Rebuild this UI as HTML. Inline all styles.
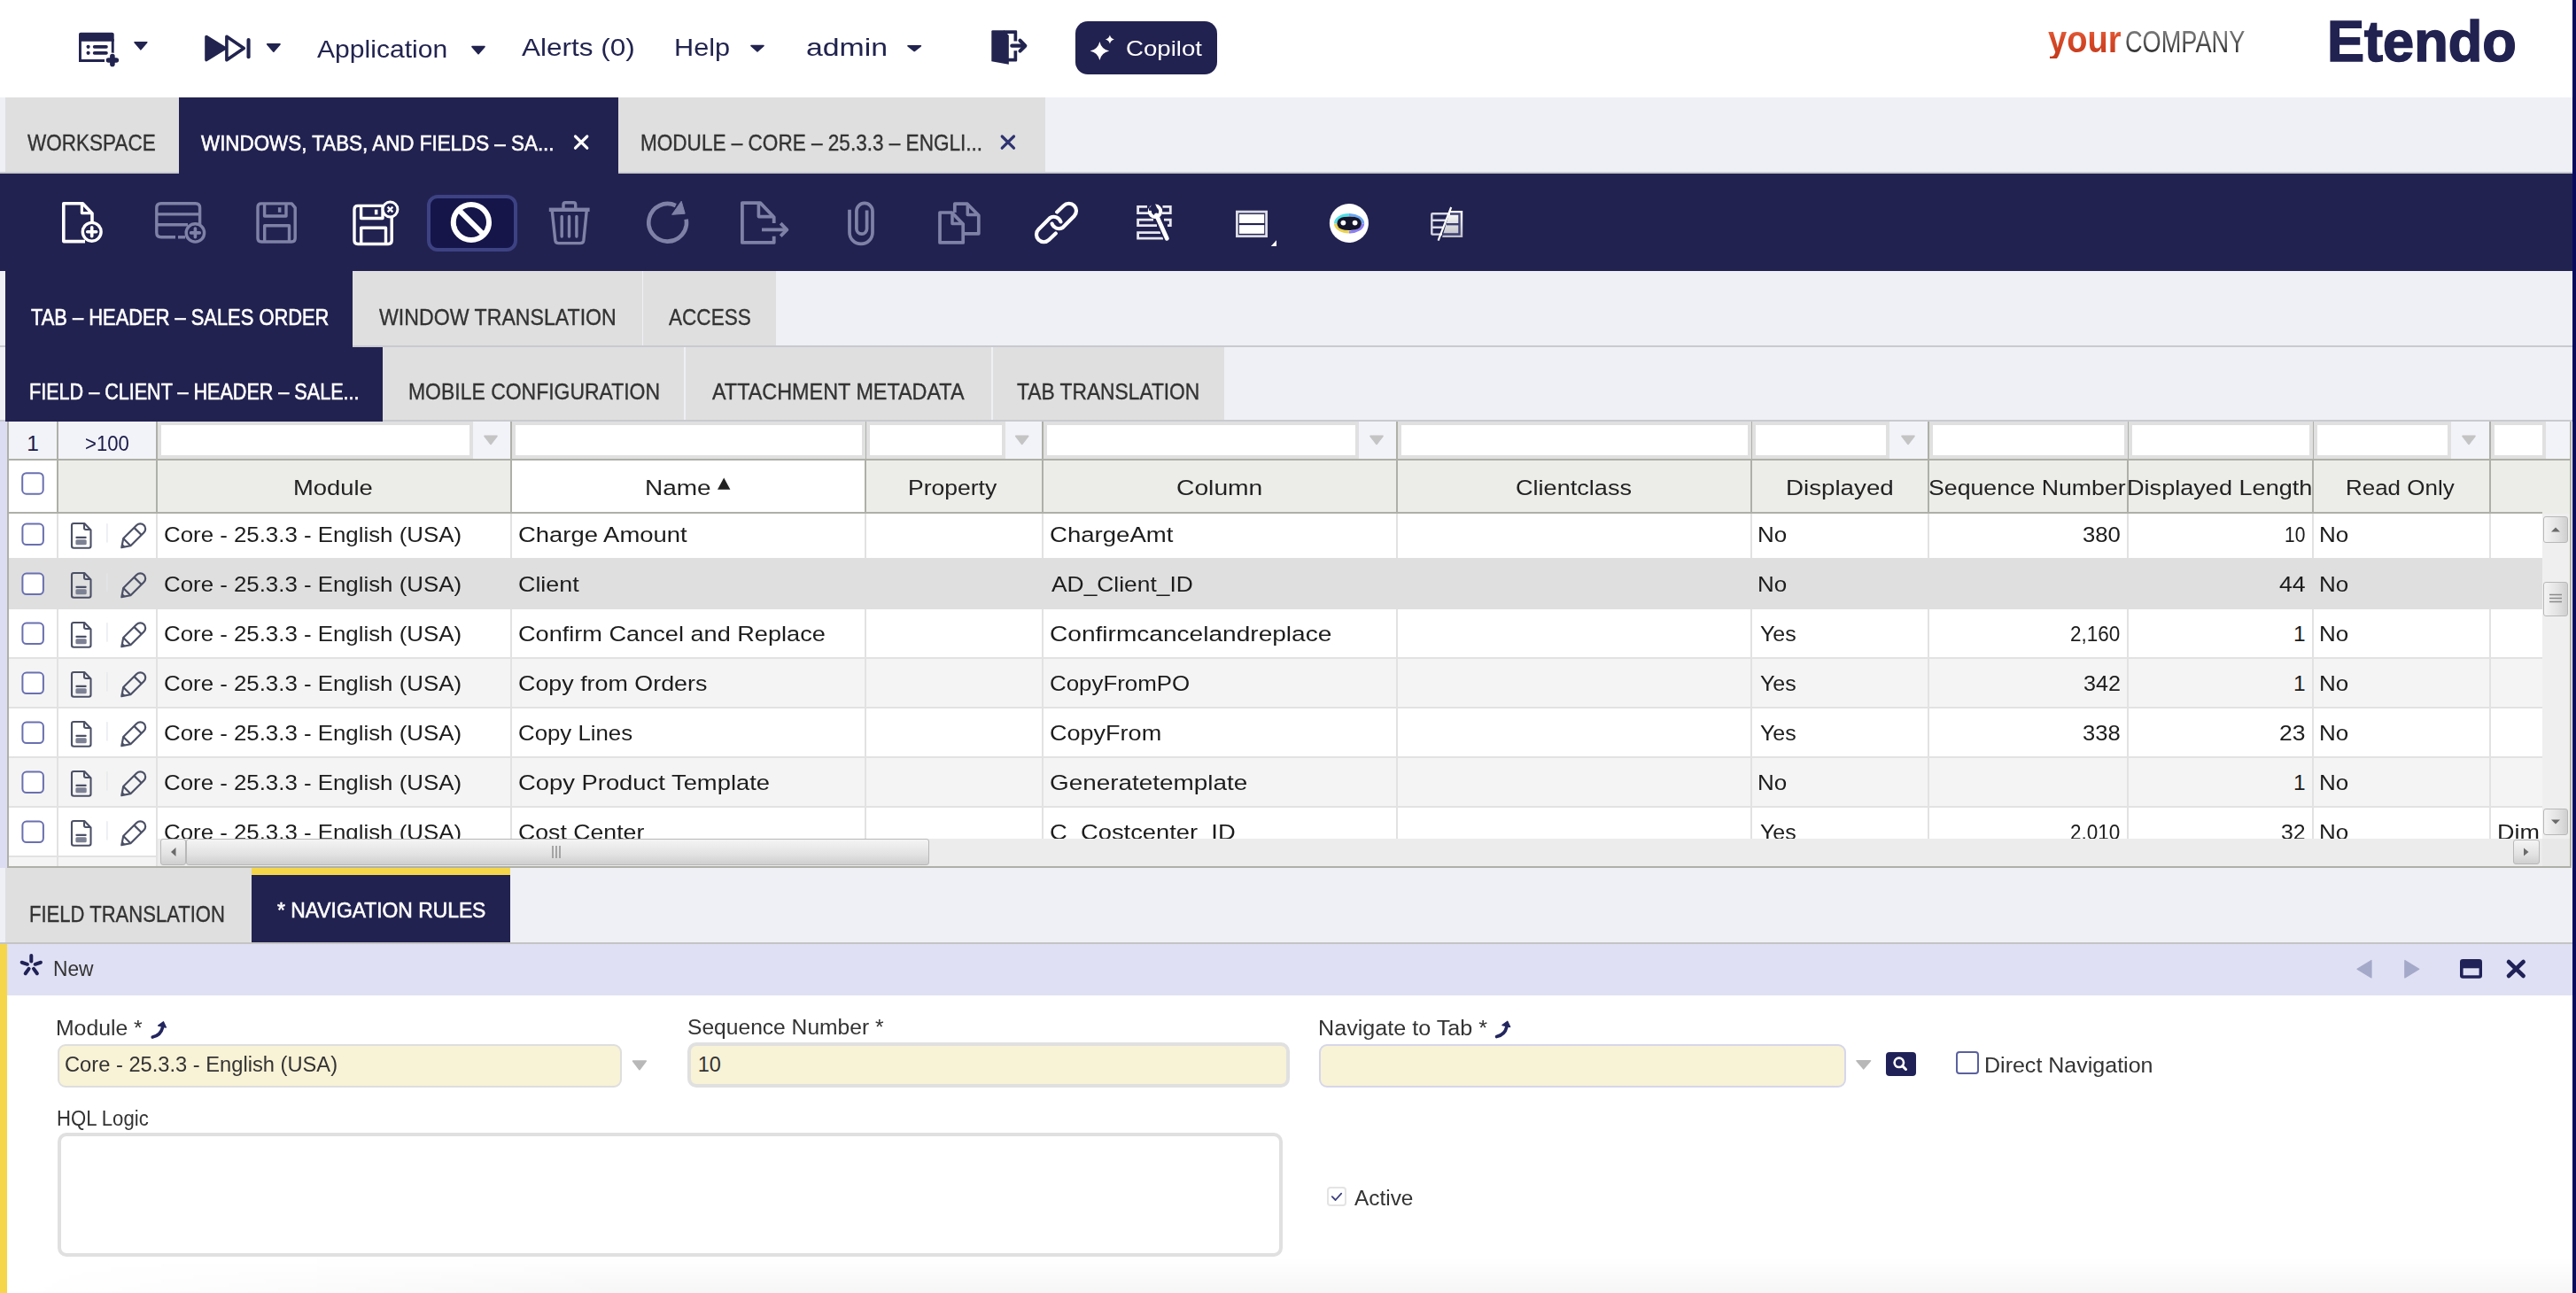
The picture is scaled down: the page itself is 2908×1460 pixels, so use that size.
<!DOCTYPE html>
<html><head><meta charset="utf-8"><style>
html,body{margin:0;padding:0;}
body{width:2908px;height:1460px;overflow:hidden;position:relative;background:#fff;font-family:"Liberation Sans",sans-serif;}
.r{position:absolute;z-index:1;}
.t{position:absolute;white-space:pre;transform-origin:0 0;z-index:5;}
svg.ic{position:absolute;left:0;top:0;z-index:4;}
</style></head><body>
<div class="r" style="left:0px;top:0px;width:2908px;height:110px;background:#ffffff;"></div><div class="r" style="left:2904px;top:0px;width:4px;height:1460px;background:#0b0b5e;z-index:20;"></div><div class="r" style="left:1214px;top:24px;width:160px;height:60px;background:#222251;border-radius:14px;"></div><div class="r" style="left:0px;top:110px;width:2908px;height:86px;background:#eef0f5;"></div><div class="r" style="left:0px;top:194px;width:2908px;height:2px;background:#c9cad0;"></div><div class="r" style="left:6px;top:110px;width:196px;height:84px;background:#dfdfdf;"></div><div class="r" style="left:202px;top:110px;width:496px;height:86px;background:#222251;"></div><div class="r" style="left:698px;top:110px;width:482px;height:84px;background:#dfdfdf;"></div><div class="r" style="left:0px;top:196px;width:2904px;height:110px;background:#222251;"></div><div class="r" style="left:482px;top:220px;width:102px;height:64px;background:#15154a;border:4px solid #3d4283;border-radius:12px;box-sizing:border-box;"></div><div class="r" style="left:0px;top:306px;width:2904px;height:170px;background:#eef0f5;"></div><div class="r" style="left:0px;top:390px;width:2904px;height:2px;background:#c9cad0;"></div><div class="r" style="left:0px;top:474px;width:2904px;height:2px;background:#c9cad0;"></div><div class="r" style="left:6px;top:306px;width:392px;height:86px;background:#222251;"></div><div class="r" style="left:398px;top:306px;width:327px;height:84px;background:#dfdfdf;"></div><div class="r" style="left:726px;top:306px;width:150px;height:84px;background:#dfdfdf;"></div><div class="r" style="left:6px;top:392px;width:426px;height:84px;background:#222251;"></div><div class="r" style="left:432px;top:392px;width:340px;height:82px;background:#dfdfdf;"></div><div class="r" style="left:774px;top:392px;width:345px;height:82px;background:#dfdfdf;"></div><div class="r" style="left:1121px;top:392px;width:261px;height:82px;background:#dfdfdf;"></div><div class="r" style="left:0px;top:476px;width:8px;height:504px;background:#dcdcf2;"></div><div class="r" style="left:8px;top:476px;width:2896px;height:504px;background:#ffffff;"></div><div class="r" style="left:8px;top:476px;width:2px;height:504px;background:#aeb0a8;"></div><div class="r" style="left:2901px;top:476px;width:2px;height:504px;background:#aeb0a8;"></div><div class="r" style="left:8px;top:978px;width:2895px;height:2px;background:#aeb0a8;"></div><div class="r" style="left:10px;top:476px;width:2891px;height:42px;background:#f2f3f8;"></div><div class="r" style="left:10px;top:518px;width:2891px;height:2px;background:#aeb0a8;"></div><div class="r" style="left:10px;top:520px;width:2891px;height:58px;background:#ecede8;"></div><div class="r" style="left:10px;top:520px;width:54px;height:58px;background:#ffffff;"></div><div class="r" style="left:578px;top:520px;width:399px;height:58px;background:#ffffff;"></div><div class="r" style="left:10px;top:578px;width:2860px;height:2px;background:#aeb0a8;"></div><div class="r" style="left:2870px;top:578px;width:31px;height:2px;background:#ecede8;"></div><div class="r" style="left:64px;top:476px;width:2px;height:104px;background:#aeb0a8;"></div><div class="r" style="left:176px;top:476px;width:2px;height:104px;background:#aeb0a8;"></div><div class="r" style="left:576px;top:476px;width:2px;height:104px;background:#aeb0a8;"></div><div class="r" style="left:976px;top:476px;width:2px;height:104px;background:#aeb0a8;"></div><div class="r" style="left:1176px;top:476px;width:2px;height:104px;background:#aeb0a8;"></div><div class="r" style="left:1576px;top:476px;width:2px;height:104px;background:#aeb0a8;"></div><div class="r" style="left:1976px;top:476px;width:2px;height:104px;background:#aeb0a8;"></div><div class="r" style="left:2176px;top:476px;width:2px;height:104px;background:#aeb0a8;"></div><div class="r" style="left:2401px;top:476px;width:2px;height:104px;background:#aeb0a8;"></div><div class="r" style="left:2610px;top:476px;width:2px;height:104px;background:#aeb0a8;"></div><div class="r" style="left:2810px;top:476px;width:2px;height:104px;background:#aeb0a8;"></div><div class="r" style="left:178px;top:476px;width:356px;height:42px;background:#e0e0e0;"></div><div class="r" style="left:182px;top:480px;width:348px;height:34px;background:#ffffff;"></div><div class="r" style="left:578px;top:476px;width:399px;height:42px;background:#e0e0e0;"></div><div class="r" style="left:582px;top:480px;width:391px;height:34px;background:#ffffff;"></div><div class="r" style="left:978px;top:476px;width:157px;height:42px;background:#e0e0e0;"></div><div class="r" style="left:982px;top:480px;width:149px;height:34px;background:#ffffff;"></div><div class="r" style="left:1178px;top:476px;width:356px;height:42px;background:#e0e0e0;"></div><div class="r" style="left:1182px;top:480px;width:348px;height:34px;background:#ffffff;"></div><div class="r" style="left:1578px;top:476px;width:399px;height:42px;background:#e0e0e0;"></div><div class="r" style="left:1582px;top:480px;width:391px;height:34px;background:#ffffff;"></div><div class="r" style="left:1978px;top:476px;width:155px;height:42px;background:#e0e0e0;"></div><div class="r" style="left:1982px;top:480px;width:147px;height:34px;background:#ffffff;"></div><div class="r" style="left:2178px;top:476px;width:224px;height:42px;background:#e0e0e0;"></div><div class="r" style="left:2182px;top:480px;width:216px;height:34px;background:#ffffff;"></div><div class="r" style="left:2403px;top:476px;width:208px;height:42px;background:#e0e0e0;"></div><div class="r" style="left:2407px;top:480px;width:200px;height:34px;background:#ffffff;"></div><div class="r" style="left:2612px;top:476px;width:155px;height:42px;background:#e0e0e0;"></div><div class="r" style="left:2616px;top:480px;width:147px;height:34px;background:#ffffff;"></div><div class="r" style="left:2812px;top:476px;width:62px;height:42px;background:#e0e0e0;"></div><div class="r" style="left:2816px;top:480px;width:54px;height:34px;background:#ffffff;"></div><div class="r" style="left:534px;top:476px;width:42px;height:42px;background:#f2f3f8;"></div><div class="r" style="left:1135px;top:476px;width:41px;height:42px;background:#f2f3f8;"></div><div class="r" style="left:1534px;top:476px;width:42px;height:42px;background:#f2f3f8;"></div><div class="r" style="left:2133px;top:476px;width:43px;height:42px;background:#f2f3f8;"></div><div class="r" style="left:2767px;top:476px;width:43px;height:42px;background:#f2f3f8;"></div><div class="r" style="left:10px;top:580px;width:2860px;height:50px;background:#ffffff;"></div><div class="r" style="left:10px;top:630px;width:2860px;height:58px;background:#dfdfdf;"></div><div class="r" style="left:10px;top:688px;width:2860px;height:54px;background:#ffffff;"></div><div class="r" style="left:10px;top:742px;width:2860px;height:2px;background:#e2e2e2;"></div><div class="r" style="left:10px;top:744px;width:2860px;height:54px;background:#f4f4f4;"></div><div class="r" style="left:10px;top:798px;width:2860px;height:2px;background:#e2e2e2;"></div><div class="r" style="left:10px;top:800px;width:2860px;height:54px;background:#ffffff;"></div><div class="r" style="left:10px;top:854px;width:2860px;height:2px;background:#e2e2e2;"></div><div class="r" style="left:10px;top:856px;width:2860px;height:54px;background:#f4f4f4;"></div><div class="r" style="left:10px;top:910px;width:2860px;height:2px;background:#e2e2e2;"></div><div class="r" style="left:10px;top:912px;width:2860px;height:54px;background:#ffffff;"></div><div class="r" style="left:10px;top:966px;width:2860px;height:2px;background:#e2e2e2;"></div><div class="r" style="left:10px;top:968px;width:2860px;height:10px;background:#f4f4f4;"></div><div class="r" style="left:64px;top:580px;width:2px;height:50px;background:#e2e2e2;"></div><div class="r" style="left:64px;top:688px;width:2px;height:290px;background:#e2e2e2;"></div><div class="r" style="left:176px;top:580px;width:2px;height:50px;background:#e2e2e2;"></div><div class="r" style="left:176px;top:688px;width:2px;height:290px;background:#e2e2e2;"></div><div class="r" style="left:576px;top:580px;width:2px;height:50px;background:#e2e2e2;"></div><div class="r" style="left:576px;top:688px;width:2px;height:290px;background:#e2e2e2;"></div><div class="r" style="left:976px;top:580px;width:2px;height:50px;background:#e2e2e2;"></div><div class="r" style="left:976px;top:688px;width:2px;height:290px;background:#e2e2e2;"></div><div class="r" style="left:1176px;top:580px;width:2px;height:50px;background:#e2e2e2;"></div><div class="r" style="left:1176px;top:688px;width:2px;height:290px;background:#e2e2e2;"></div><div class="r" style="left:1576px;top:580px;width:2px;height:50px;background:#e2e2e2;"></div><div class="r" style="left:1576px;top:688px;width:2px;height:290px;background:#e2e2e2;"></div><div class="r" style="left:1976px;top:580px;width:2px;height:50px;background:#e2e2e2;"></div><div class="r" style="left:1976px;top:688px;width:2px;height:290px;background:#e2e2e2;"></div><div class="r" style="left:2176px;top:580px;width:2px;height:50px;background:#e2e2e2;"></div><div class="r" style="left:2176px;top:688px;width:2px;height:290px;background:#e2e2e2;"></div><div class="r" style="left:2401px;top:580px;width:2px;height:50px;background:#e2e2e2;"></div><div class="r" style="left:2401px;top:688px;width:2px;height:290px;background:#e2e2e2;"></div><div class="r" style="left:2610px;top:580px;width:2px;height:50px;background:#e2e2e2;"></div><div class="r" style="left:2610px;top:688px;width:2px;height:290px;background:#e2e2e2;"></div><div class="r" style="left:2810px;top:580px;width:2px;height:50px;background:#e2e2e2;"></div><div class="r" style="left:2810px;top:688px;width:2px;height:290px;background:#e2e2e2;"></div><div class="r" style="left:2870px;top:580px;width:31px;height:367px;background:#efefef;"></div><div class="r" style="left:2867px;top:947px;width:34px;height:31px;background:#e8e8e8;"></div><div class="r" style="left:178px;top:947px;width:2692px;height:31px;background:#ececec;z-index:8;"></div><div class="r" style="left:2870.5px;top:583px;width:28.5px;height:30px;background:linear-gradient(90deg,#f4f4f4,#e2e2e2 60%,#cfcfcf);border:1px solid #b8b8b8;border-radius:3px;box-sizing:border-box;z-index:8;"></div><div class="r" style="left:2870.5px;top:656.5px;width:28.5px;height:39px;background:linear-gradient(90deg,#f4f4f4,#e2e2e2 60%,#cfcfcf);border:1px solid #b8b8b8;border-radius:3px;box-sizing:border-box;z-index:8;"></div><div class="r" style="left:2870.5px;top:913px;width:28.5px;height:30px;background:linear-gradient(90deg,#f4f4f4,#e2e2e2 60%,#cfcfcf);border:1px solid #b8b8b8;border-radius:3px;box-sizing:border-box;z-index:8;"></div><div class="r" style="left:180.8px;top:947px;width:29.6px;height:29.5px;background:linear-gradient(180deg,#f4f4f4,#e2e2e2 60%,#cfcfcf);border:1px solid #b8b8b8;border-radius:3px;box-sizing:border-box;z-index:9;"></div><div class="r" style="left:210px;top:947px;width:839px;height:29.5px;background:linear-gradient(180deg,#f4f4f4,#e2e2e2 60%,#cfcfcf);border:1px solid #b8b8b8;border-radius:3px;box-sizing:border-box;z-index:9;"></div><div class="r" style="left:2836.7px;top:947.8px;width:30.3px;height:28.2px;background:linear-gradient(180deg,#f4f4f4,#e2e2e2 60%,#cfcfcf);border:1px solid #b8b8b8;border-radius:3px;box-sizing:border-box;z-index:9;"></div><div class="r" style="left:0px;top:980px;width:2904px;height:86px;background:#eef0f5;"></div><div class="r" style="left:6px;top:980px;width:278px;height:85px;background:#dfdfdf;"></div><div class="r" style="left:284px;top:980px;width:292px;height:86px;background:#222251;"></div><div class="r" style="left:284px;top:980px;width:292px;height:8px;background:#f5d64a;"></div><div class="r" style="left:0px;top:1064px;width:2904px;height:2px;background:#c4c4c4;"></div><div class="r" style="left:0px;top:1066px;width:2904px;height:394px;background:#ffffff;"></div><div class="r" style="left:0px;top:1066px;width:8px;height:394px;background:#f5d64a;z-index:3;"></div><div class="r" style="left:8px;top:1420px;width:2896px;height:40px;background:linear-gradient(180deg,rgba(0,0,0,0),rgba(0,0,0,0.035));-webkit-mask-image:linear-gradient(90deg,transparent 0px,#000 700px);z-index:2;"></div><div class="r" style="left:8px;top:1066px;width:2896px;height:58px;background:#dfe0f3;"></div><div class="r" style="left:65px;top:1179px;width:637px;height:49px;background:#f8f2d6;border:2px solid #dedede;border-radius:9px;box-sizing:border-box;"></div><div class="r" style="left:776px;top:1177px;width:680px;height:51px;background:#f8f2d6;border:4px solid #e0e0e0;border-radius:10px;box-sizing:border-box;"></div><div class="r" style="left:1488.5px;top:1178.5px;width:595px;height:49px;background:#f8f2d6;border:2px solid #d6d6ea;border-radius:9px;box-sizing:border-box;"></div><div class="r" style="left:2129px;top:1188px;width:34px;height:27px;background:#1f2157;border-radius:4px;"></div><div class="r" style="left:2208px;top:1187px;width:26px;height:26px;background:#ffffff;border:2px solid #5a60a0;border-radius:4px;box-sizing:border-box;"></div><div class="r" style="left:65px;top:1279px;width:1383px;height:140px;background:#ffffff;border:4px solid #e0e0e0;border-radius:10px;box-sizing:border-box;"></div><div class="r" style="left:1498px;top:1340px;width:22px;height:22px;background:#ffffff;border:2px solid #e4e4e4;border-radius:4px;box-sizing:border-box;"></div>
<svg class="ic" width="2908" height="1460" viewBox="0 0 2908 1460">
<g fill="#22244f" stroke="none"><path d="M91,36.8 H126.7 Q128.7,36.8 128.7,38.8 V46.8 H89 V38.8 Q89,36.8 91,36.8 Z"/><rect x="89" y="44" width="2.9" height="26" /><rect x="125.8" y="44" width="2.9" height="20"/><path d="M89,67.1 H118 V70 H91 Q89,70 89,68 Z"/><circle cx="99.6" cy="52.8" r="2.1"/><circle cx="99.6" cy="59.8" r="2.1"/><rect x="104.8" y="51" width="17" height="3.7" rx="1.8"/><rect x="104.8" y="58" width="17" height="3.7" rx="1.8"/></g><circle cx="126.9" cy="68" r="8.6" fill="#fff"/><path d="M126.9,63.6 V72.4 M122.5,68 H131.3" stroke="#22244f" stroke-width="5.6" stroke-linecap="round" fill="none"/><circle cx="126.9" cy="68" r="3.4" fill="#22244f"/>
<path d="M152,47.8 H165.8 L158.9,55.800000000000004 Z" fill="#22244f" stroke="#22244f" stroke-width="1.6" stroke-linejoin="round"/>
<path d="M233,41.5 L254,54.5 L233,67.5 Z" fill="#22244f" stroke="#22244f" stroke-width="3.6" stroke-linejoin="round"/>
<path d="M255.9,41.3 L275.3,54.5 L255.9,67.7 Z" fill="none" stroke="#22244f" stroke-width="3.6" stroke-linejoin="round"/>
<rect x="278.5" y="43" width="4.1" height="23.3" rx="2" fill="#22244f"/>
<path d="M301.7,49.9 H316 L308.85,58.1 Z" fill="#22244f" stroke="#22244f" stroke-width="1.6" stroke-linejoin="round"/>
<path d="M533,52.599999999999994 H547 L540.0,60.6 Z" fill="#22244f" stroke="#22244f" stroke-width="1.6" stroke-linejoin="round"/>
<path d="M848,51.599999999999994 H862 L855.0,57.800000000000004 Z" fill="#22244f" stroke="#22244f" stroke-width="1.6" stroke-linejoin="round"/>
<path d="M1025,51.8 H1039.4 L1032.2,57.5 Z" fill="#22244f" stroke="#22244f" stroke-width="1.6" stroke-linejoin="round"/>
<g fill="#22244f"><path d="M1120.5,34.3 H1133.6 L1138.8,40 V72.8 L1119.3,69.2 V35.5 Q1119.3,34.3 1120.5,34.3 Z"/><path d="M1133,34.3 H1147 Q1148.2,34.3 1148.2,35.5 V46.4 H1144.5 V38 H1133 Z"/><path d="M1138,65.7 H1144.5 V57.3 H1148.2 V68.2 Q1148.2,69.4 1147,69.4 H1138 Z"/></g><path d="M1142.3,51.7 H1155" stroke="#22244f" stroke-width="4.2" stroke-linecap="round"/><path d="M1151.5,45.8 L1157.3,51.7 L1151.5,57.6" stroke="#22244f" stroke-width="4.2" fill="none" stroke-linecap="round" stroke-linejoin="round"/>
<path d="M1241.4,46.9 Q1243.344,55.592 1252.2,57.5 Q1243.344,59.408 1241.4,68.1 Q1239.4560000000001,59.408 1230.6000000000001,57.5 Q1239.4560000000001,55.592 1241.4,46.9 Z" fill="#fff"/>
<path d="M1252.9,39.6 Q1253.8000000000002,43.7 1257.9,44.6 Q1253.8000000000002,45.5 1252.9,49.6 Q1252.0,45.5 1247.9,44.6 Q1252.0,43.7 1252.9,39.6 Z" fill="#fff"/>
<path d="M104,250 V241 L93.3,229.8 H71.8 V272.6 H96" fill="none" stroke="#ffffff" stroke-width="3.6" stroke-linejoin="round" />
<path d="M92.4,230 V240.6 H104" fill="none" stroke="#ffffff" stroke-width="3.2" stroke-linejoin="round" />
<circle cx="103.7" cy="261.8" r="10.4" fill="#222251" stroke="#ffffff" stroke-width="3.4"/>
<path d="M103.7,256.8 V266.8 M98.7,261.8 H108.7" fill="none" stroke="#ffffff" stroke-width="3.6" stroke-linejoin="round" stroke-linecap="round"/>
<path d="M181.8,229.8 H220.6 Q225.6,229.8 225.6,234.8 V262 M198,267.8 H181.8 Q176.8,267.8 176.8,262.8 V234.8 Q176.8,229.8 181.8,229.8 M176.8,241.9 H225.6 M176.8,253.8 H212" fill="none" stroke="#7f82a6" stroke-width="3.4" stroke-linejoin="round" />
<circle cx="220.4" cy="262.9" r="10.2" fill="#222251" stroke="#7f82a6" stroke-width="3.4"/>
<path d="M220.4,258 V267.8 M215.5,262.9 H225.3" fill="none" stroke="#7f82a6" stroke-width="3.6" stroke-linejoin="round" stroke-linecap="round"/>
<path d="M201,267.8 H209" fill="none" stroke="#7f82a6" stroke-width="3.4" stroke-linejoin="round" />
<g transform="translate(0,0)"><path d="M295,229.9 H329.3 L333.2,234.6 V269 Q333.2,273 329.2,273 H295 Q291,273 291,269 V233.9 Q291,229.9 295,229.9 Z" fill="none" stroke="#7f82a6" stroke-width="3.4" stroke-linejoin="round" /><path d="M298.6,230 V244 H323 V230" fill="none" stroke="#7f82a6" stroke-width="3.4" stroke-linejoin="round" /><rect x="313.9" y="234.2" width="3.5" height="5.6" fill="#7f82a6"/><path d="M298.7,273 V254.7 H326.5 V273" fill="none" stroke="#7f82a6" stroke-width="3.4" stroke-linejoin="round" /></g>
<g transform="translate(109,2.5)"><path d="M295,229.9 H329.3 L333.2,234.6 V269 Q333.2,273 329.2,273 H295 Q291,273 291,269 V233.9 Q291,229.9 295,229.9 Z" fill="none" stroke="#ffffff" stroke-width="3.4" stroke-linejoin="round" /><path d="M298.6,230 V244 H323 V230" fill="none" stroke="#ffffff" stroke-width="3.4" stroke-linejoin="round" /><rect x="313.9" y="234.2" width="3.5" height="5.6" fill="#ffffff"/><path d="M298.7,273 V254.7 H326.5 V273" fill="none" stroke="#ffffff" stroke-width="3.4" stroke-linejoin="round" /></g>
<circle cx="440.5" cy="236.5" r="8.4" fill="#222251" stroke="#ffffff" stroke-width="3"/>
<path d="M437.6,233.6 L443.4,239.4 M443.4,233.6 L437.6,239.4" fill="none" stroke="#ffffff" stroke-width="2.2" stroke-linejoin="round" />
<circle cx="531.9" cy="251" r="20.1" fill="none" stroke="#ffffff" stroke-width="6"/>
<path d="M518,237.1 L545.8,264.9" fill="none" stroke="#ffffff" stroke-width="6" stroke-linejoin="round" />
<rect x="619.8" y="234.6" width="45.8" height="4.4" fill="#7f82a6"/>
<path d="M636,235 V231 Q636,228.8 638.2,228.8 H647.5 Q649.7,228.8 649.7,231 V235" fill="none" stroke="#7f82a6" stroke-width="3.4" stroke-linejoin="round" />
<path d="M623.3,238.5 L626.8,271.2 Q627.3,274.6 630.7,274.6 H655 Q658.4,274.6 658.9,271.2 L662.2,238.5" fill="none" stroke="#7f82a6" stroke-width="3.4" stroke-linejoin="round" />
<path d="M634.2,244.5 V267 M642.5,244.5 V267 M650.9,244.5 V267" fill="none" stroke="#7f82a6" stroke-width="3.4" stroke-linejoin="round" stroke-linecap="round"/>
<path d="M774.6,247.6 A21.3,21.3 0 1 1 762.8,232.1" fill="none" stroke="#7f82a6" stroke-width="4.6" stroke-linejoin="round" />
<path d="M769.2,227.2 L773.2,241.2 L758.6,242.3 Z" fill="#7f82a6" stroke="#7f82a6" stroke-width="1" stroke-linejoin="round"/>
<path d="M873.7,252 V245.2 L858.3,229.1 H837.9 V273.9 H873.7 V266.8" fill="none" stroke="#7f82a6" stroke-width="3.8" stroke-linejoin="round" />
<path d="M856.4,229.4 V244.6 H873.4" fill="none" stroke="#7f82a6" stroke-width="3.6" stroke-linejoin="round" />
<path d="M860,259.4 H887.5" fill="none" stroke="#7f82a6" stroke-width="3.8" stroke-linejoin="round" />
<path d="M881.2,252.2 L888.3,259.4 L881.2,266.6" fill="none" stroke="#7f82a6" stroke-width="3.8" stroke-linejoin="round" stroke-linecap="butt"/>
<path d="M959,236.8 V262.4 A13,13 0 0 0 985,262.4 V238.5 A9.05,9.05 0 0 0 966.9,238.5 V258.3 A5.85,5.85 0 0 0 978.6,258.3 V237.4" fill="none" stroke="#7f82a6" stroke-width="3.7" stroke-linejoin="round" />
<path d="M1077.8,240 V230.2 H1092 L1104.8,243.2 V263.8 H1087.2" fill="none" stroke="#7f82a6" stroke-width="3.7" stroke-linejoin="round" />
<path d="M1092.3,230.5 V242.6 H1104.5" fill="none" stroke="#7f82a6" stroke-width="3.5" stroke-linejoin="round" />
<path d="M1061,240 H1074.6 L1087.2,253.1 V273.9 H1061 Z" fill="none" stroke="#7f82a6" stroke-width="3.7" stroke-linejoin="round" />
<path d="M1075,240.3 V252.6 H1087" fill="none" stroke="#7f82a6" stroke-width="3.5" stroke-linejoin="round" />
<path d="M1193.2,239.4 L1200.8,232.2 A8.3,8.3 0 0 1 1212.6,243.9 L1199.4,257.2 A8.3,8.3 0 0 1 1187.6,252.6" fill="none" stroke="#ffffff" stroke-width="4.2" stroke-linejoin="round" stroke-linecap="round"/>
<path d="M1191.8,263.6 L1184.2,270.8 A8.3,8.3 0 0 1 1172.4,259.1 L1185.6,245.8 A8.3,8.3 0 0 1 1197.4,250.4" fill="none" stroke="#ffffff" stroke-width="4.2" stroke-linejoin="round" stroke-linecap="round"/>
<g fill="none" stroke="#e6e6ee" stroke-width="2.8"><path d="M1295,233.4 H1284.6 V240.6 H1297"/><path d="M1312.5,233.4 H1321.3 V240.6 H1312"/><path d="M1302,248.1 H1284.6 V254.6 H1306"/><path d="M1314,248.1 H1321.3 V254.6 H1318"/><path d="M1310,262.6 H1284.6 V269.2 H1313"/></g>
<path d="M1305.5,243 L1317.3,269.2" stroke="#222251" stroke-width="8" stroke-linecap="round"/>
<path d="M1305.5,243 L1317.3,269.2" stroke="#ffffff" stroke-width="4.8" stroke-linecap="round"/>
<circle cx="1304" cy="238.8" r="6.2" fill="none" stroke="#ffffff" stroke-width="4"/>
<path d="M1301.5,229 L1305,236.5 L1297,236" stroke="#222251" stroke-width="3.5" fill="#222251"/>
<rect x="1396.4" y="239.1" width="33.2" height="27.6" fill="none" stroke="#dcdce6" stroke-width="2.8"/>
<rect x="1398.9" y="241.9" width="28.3" height="10.1" fill="#fff"/>
<rect x="1398.9" y="254.1" width="28.3" height="9.8" fill="#fff"/>
<path d="M1441,271.3 V278 H1434.8 Z" fill="#fff"/>
<circle cx="1522.9" cy="252" r="22" fill="#fff"/><path d="M1507.6,252.5 A15.6,9.6 0 0 1 1523,242.6" stroke="#4fe0e6" stroke-width="3.2" fill="none"/><path d="M1523,242.6 A15.6,9.6 0 0 1 1538.6,252.5" stroke="#6aa6f2" stroke-width="3.2" fill="none"/><path d="M1538.6,252.5 A15.6,9.6 0 0 1 1523,262" stroke="#8c7ef2" stroke-width="3.2" fill="none"/><path d="M1523,262 A15.6,9.6 0 0 1 1507.6,252.5" stroke="#ecd24a" stroke-width="3.2" fill="none"/><path d="M1509.4,252.2 Q1509.4,244.4 1523.1,244.4 Q1536.9,244.4 1536.9,252.2 Q1536.9,260 1523.1,260 Q1509.4,260 1509.4,252.2 Z" fill="#14142a"/><circle cx="1516.4" cy="251.6" r="2.9" fill="#fff"/><circle cx="1529.6" cy="251.6" r="2.9" fill="#fff"/>
<defs><linearGradient id="tg" x1="0" y1="0" x2="0" y2="1"><stop offset="0" stop-color="#ffffff"/><stop offset="1" stop-color="#bcbcc4"/></linearGradient></defs>
<path d="M1637,238 H1651.2 V268 H1628 Z" fill="url(#tg)"/>
<path d="M1637,241.5 H1647.5 V264.5 H1628.8" fill="none" stroke="#3c3f70" stroke-width="2.4"/>
<path d="M1633,253.2 H1647" stroke="#3c3f70" stroke-width="2.4"/>
<path d="M1635,241.3 H1617 Q1616.3,241.3 1616.3,242 V264 Q1616.3,264.6 1617,264.6 H1628 M1616.3,248.8 H1632 M1616.3,256.8 H1630" fill="none" stroke="#d8d8e4" stroke-width="2.4"/>
<path d="M1638.2,234 L1623.6,271.6" stroke="#fff" stroke-width="2.2"/>
<path d="M649.5,154 L662.8,167.2 M662.8,154 L649.5,167.2" fill="none" stroke="#ffffff" stroke-width="3.2" stroke-linejoin="round" stroke-linecap="round"/>
<path d="M1131.2,154 L1144.5,167.2 M1144.5,154 L1131.2,167.2" fill="none" stroke="#2f3370" stroke-width="3.2" stroke-linejoin="round" stroke-linecap="round"/>
<path d="M547,492.40000000000003 H561 L554.0,501.4 Z" fill="#c4c4c4" stroke="#c4c4c4" stroke-width="1.6" stroke-linejoin="round"/>
<path d="M1146.7,492.40000000000003 H1160.7 L1153.7,501.4 Z" fill="#c4c4c4" stroke="#c4c4c4" stroke-width="1.6" stroke-linejoin="round"/>
<path d="M1547,492.40000000000003 H1561 L1554.0,501.4 Z" fill="#c4c4c4" stroke="#c4c4c4" stroke-width="1.6" stroke-linejoin="round"/>
<path d="M2147,492.40000000000003 H2161 L2154.0,501.4 Z" fill="#c4c4c4" stroke="#c4c4c4" stroke-width="1.6" stroke-linejoin="round"/>
<path d="M2780,492.40000000000003 H2794 L2787.0,501.4 Z" fill="#c4c4c4" stroke="#c4c4c4" stroke-width="1.6" stroke-linejoin="round"/>
<path d="M810,552.8 H824.4 L817.2,539.5 Z" fill="#222"/>
<rect x="25.2" y="534.2" width="23.5" height="23.5" rx="4.5" fill="#fff" stroke="#6a70b0" stroke-width="2"/>
<g clip-path="url(#cl)">
<rect x="25.4" y="591.6" width="23.5" height="23.5" rx="4.5" fill="#fff" stroke="#6a70b0" stroke-width="2"/>
<g transform="translate(0,0.0)"><path d="M95.3,591 H83.2 Q81,591 81,593.2 V616.6 Q81,618.8 83.2,618.8 H100.3 Q102.5,618.8 102.5,616.6 V598.5 Z" fill="none" stroke="#4b5066" stroke-width="2.1" stroke-linejoin="round" /><path d="M95,591.2 V596 Q95,598 97,598 H102.3" fill="none" stroke="#4b5066" stroke-width="2.1" stroke-linejoin="round" /><rect x="85.4" y="605.8" width="12.3" height="2.3" rx="1" fill="#4b5066"/><rect x="85.4" y="609.3" width="12.3" height="6" rx="1.5" fill="#7d8194"/></g>
<rect x="120.3" y="591.2" width="1.2" height="21.4" fill="#e4e5ea"/>
<g transform="translate(137.3,618.2) rotate(-45)"><path d="M0,0 L8.5,-5.8 H29.8 A5.8,5.8 0 0 1 29.8,5.8 H8.5 Z" fill="none" stroke="#4b5066" stroke-width="2.2" stroke-linejoin="round" /><path d="M8.5,-5.8 V5.8 M25.8,-5.8 V5.8" fill="none" stroke="#4b5066" stroke-width="2.2" stroke-linejoin="round" /><path d="M0,0 L3.6,-2.2 V2.2 Z" fill="#4b5066"/></g>
</g>
<g clip-path="url(#cl)">
<rect x="25.4" y="647.6" width="23.5" height="23.5" rx="4.5" fill="#fff" stroke="#6a70b0" stroke-width="2"/>
<g transform="translate(0,56.0)"><path d="M95.3,591 H83.2 Q81,591 81,593.2 V616.6 Q81,618.8 83.2,618.8 H100.3 Q102.5,618.8 102.5,616.6 V598.5 Z" fill="none" stroke="#4b5066" stroke-width="2.1" stroke-linejoin="round" /><path d="M95,591.2 V596 Q95,598 97,598 H102.3" fill="none" stroke="#4b5066" stroke-width="2.1" stroke-linejoin="round" /><rect x="85.4" y="605.8" width="12.3" height="2.3" rx="1" fill="#4b5066"/><rect x="85.4" y="609.3" width="12.3" height="6" rx="1.5" fill="#7d8194"/></g>
<rect x="120.3" y="647.2" width="1.2" height="21.4" fill="#e4e5ea"/>
<g transform="translate(137.3,674.2) rotate(-45)"><path d="M0,0 L8.5,-5.8 H29.8 A5.8,5.8 0 0 1 29.8,5.8 H8.5 Z" fill="none" stroke="#4b5066" stroke-width="2.2" stroke-linejoin="round" /><path d="M8.5,-5.8 V5.8 M25.8,-5.8 V5.8" fill="none" stroke="#4b5066" stroke-width="2.2" stroke-linejoin="round" /><path d="M0,0 L3.6,-2.2 V2.2 Z" fill="#4b5066"/></g>
</g>
<g clip-path="url(#cl)">
<rect x="25.4" y="703.6" width="23.5" height="23.5" rx="4.5" fill="#fff" stroke="#6a70b0" stroke-width="2"/>
<g transform="translate(0,112.0)"><path d="M95.3,591 H83.2 Q81,591 81,593.2 V616.6 Q81,618.8 83.2,618.8 H100.3 Q102.5,618.8 102.5,616.6 V598.5 Z" fill="none" stroke="#4b5066" stroke-width="2.1" stroke-linejoin="round" /><path d="M95,591.2 V596 Q95,598 97,598 H102.3" fill="none" stroke="#4b5066" stroke-width="2.1" stroke-linejoin="round" /><rect x="85.4" y="605.8" width="12.3" height="2.3" rx="1" fill="#4b5066"/><rect x="85.4" y="609.3" width="12.3" height="6" rx="1.5" fill="#7d8194"/></g>
<rect x="120.3" y="703.2" width="1.2" height="21.4" fill="#e4e5ea"/>
<g transform="translate(137.3,730.2) rotate(-45)"><path d="M0,0 L8.5,-5.8 H29.8 A5.8,5.8 0 0 1 29.8,5.8 H8.5 Z" fill="none" stroke="#4b5066" stroke-width="2.2" stroke-linejoin="round" /><path d="M8.5,-5.8 V5.8 M25.8,-5.8 V5.8" fill="none" stroke="#4b5066" stroke-width="2.2" stroke-linejoin="round" /><path d="M0,0 L3.6,-2.2 V2.2 Z" fill="#4b5066"/></g>
</g>
<g clip-path="url(#cl)">
<rect x="25.4" y="759.6" width="23.5" height="23.5" rx="4.5" fill="#fff" stroke="#6a70b0" stroke-width="2"/>
<g transform="translate(0,168.0)"><path d="M95.3,591 H83.2 Q81,591 81,593.2 V616.6 Q81,618.8 83.2,618.8 H100.3 Q102.5,618.8 102.5,616.6 V598.5 Z" fill="none" stroke="#4b5066" stroke-width="2.1" stroke-linejoin="round" /><path d="M95,591.2 V596 Q95,598 97,598 H102.3" fill="none" stroke="#4b5066" stroke-width="2.1" stroke-linejoin="round" /><rect x="85.4" y="605.8" width="12.3" height="2.3" rx="1" fill="#4b5066"/><rect x="85.4" y="609.3" width="12.3" height="6" rx="1.5" fill="#7d8194"/></g>
<rect x="120.3" y="759.2" width="1.2" height="21.4" fill="#e4e5ea"/>
<g transform="translate(137.3,786.2) rotate(-45)"><path d="M0,0 L8.5,-5.8 H29.8 A5.8,5.8 0 0 1 29.8,5.8 H8.5 Z" fill="none" stroke="#4b5066" stroke-width="2.2" stroke-linejoin="round" /><path d="M8.5,-5.8 V5.8 M25.8,-5.8 V5.8" fill="none" stroke="#4b5066" stroke-width="2.2" stroke-linejoin="round" /><path d="M0,0 L3.6,-2.2 V2.2 Z" fill="#4b5066"/></g>
</g>
<g clip-path="url(#cl)">
<rect x="25.4" y="815.6" width="23.5" height="23.5" rx="4.5" fill="#fff" stroke="#6a70b0" stroke-width="2"/>
<g transform="translate(0,224.0)"><path d="M95.3,591 H83.2 Q81,591 81,593.2 V616.6 Q81,618.8 83.2,618.8 H100.3 Q102.5,618.8 102.5,616.6 V598.5 Z" fill="none" stroke="#4b5066" stroke-width="2.1" stroke-linejoin="round" /><path d="M95,591.2 V596 Q95,598 97,598 H102.3" fill="none" stroke="#4b5066" stroke-width="2.1" stroke-linejoin="round" /><rect x="85.4" y="605.8" width="12.3" height="2.3" rx="1" fill="#4b5066"/><rect x="85.4" y="609.3" width="12.3" height="6" rx="1.5" fill="#7d8194"/></g>
<rect x="120.3" y="815.2" width="1.2" height="21.4" fill="#e4e5ea"/>
<g transform="translate(137.3,842.2) rotate(-45)"><path d="M0,0 L8.5,-5.8 H29.8 A5.8,5.8 0 0 1 29.8,5.8 H8.5 Z" fill="none" stroke="#4b5066" stroke-width="2.2" stroke-linejoin="round" /><path d="M8.5,-5.8 V5.8 M25.8,-5.8 V5.8" fill="none" stroke="#4b5066" stroke-width="2.2" stroke-linejoin="round" /><path d="M0,0 L3.6,-2.2 V2.2 Z" fill="#4b5066"/></g>
</g>
<g clip-path="url(#cl)">
<rect x="25.4" y="871.6" width="23.5" height="23.5" rx="4.5" fill="#fff" stroke="#6a70b0" stroke-width="2"/>
<g transform="translate(0,280.0)"><path d="M95.3,591 H83.2 Q81,591 81,593.2 V616.6 Q81,618.8 83.2,618.8 H100.3 Q102.5,618.8 102.5,616.6 V598.5 Z" fill="none" stroke="#4b5066" stroke-width="2.1" stroke-linejoin="round" /><path d="M95,591.2 V596 Q95,598 97,598 H102.3" fill="none" stroke="#4b5066" stroke-width="2.1" stroke-linejoin="round" /><rect x="85.4" y="605.8" width="12.3" height="2.3" rx="1" fill="#4b5066"/><rect x="85.4" y="609.3" width="12.3" height="6" rx="1.5" fill="#7d8194"/></g>
<rect x="120.3" y="871.2" width="1.2" height="21.4" fill="#e4e5ea"/>
<g transform="translate(137.3,898.2) rotate(-45)"><path d="M0,0 L8.5,-5.8 H29.8 A5.8,5.8 0 0 1 29.8,5.8 H8.5 Z" fill="none" stroke="#4b5066" stroke-width="2.2" stroke-linejoin="round" /><path d="M8.5,-5.8 V5.8 M25.8,-5.8 V5.8" fill="none" stroke="#4b5066" stroke-width="2.2" stroke-linejoin="round" /><path d="M0,0 L3.6,-2.2 V2.2 Z" fill="#4b5066"/></g>
</g>
<g clip-path="url(#cl)">
<rect x="25.4" y="927.6" width="23.5" height="23.5" rx="4.5" fill="#fff" stroke="#6a70b0" stroke-width="2"/>
<g transform="translate(0,336.0)"><path d="M95.3,591 H83.2 Q81,591 81,593.2 V616.6 Q81,618.8 83.2,618.8 H100.3 Q102.5,618.8 102.5,616.6 V598.5 Z" fill="none" stroke="#4b5066" stroke-width="2.1" stroke-linejoin="round" /><path d="M95,591.2 V596 Q95,598 97,598 H102.3" fill="none" stroke="#4b5066" stroke-width="2.1" stroke-linejoin="round" /><rect x="85.4" y="605.8" width="12.3" height="2.3" rx="1" fill="#4b5066"/><rect x="85.4" y="609.3" width="12.3" height="6" rx="1.5" fill="#7d8194"/></g>
<rect x="120.3" y="927.2" width="1.2" height="21.4" fill="#e4e5ea"/>
<g transform="translate(137.3,954.2) rotate(-45)"><path d="M0,0 L8.5,-5.8 H29.8 A5.8,5.8 0 0 1 29.8,5.8 H8.5 Z" fill="none" stroke="#4b5066" stroke-width="2.2" stroke-linejoin="round" /><path d="M8.5,-5.8 V5.8 M25.8,-5.8 V5.8" fill="none" stroke="#4b5066" stroke-width="2.2" stroke-linejoin="round" /><path d="M0,0 L3.6,-2.2 V2.2 Z" fill="#4b5066"/></g>
</g>
<defs><clipPath id="cl"><rect x="10" y="580" width="168" height="398"/></clipPath></defs>
<path d="M35.30,1085.60 L35.30,1079.00" stroke="#1f2157" stroke-width="4" stroke-linecap="round"/>
<path d="M39.67,1088.78 L45.95,1086.74" stroke="#1f2157" stroke-width="4" stroke-linecap="round"/>
<path d="M38.00,1093.92 L41.88,1099.26" stroke="#1f2157" stroke-width="4" stroke-linecap="round"/>
<path d="M32.60,1093.92 L28.72,1099.26" stroke="#1f2157" stroke-width="4" stroke-linecap="round"/>
<path d="M30.93,1088.78 L24.65,1086.74" stroke="#1f2157" stroke-width="4" stroke-linecap="round"/>
<path d="M2677,1084.5 V1104 L2661,1094.2 Z" fill="#a5a9c9" stroke="#a5a9c9" stroke-width="1.2" stroke-linejoin="round"/>
<path d="M2714.8,1084.5 V1104 L2730.8,1094.2 Z" fill="#a5a9c9" stroke="#a5a9c9" stroke-width="1.2" stroke-linejoin="round"/>
<rect x="2777" y="1083" width="25" height="21.8" rx="3.2" fill="#1f2157"/><rect x="2780.6" y="1093.3" width="18" height="8" fill="#dfe0f3"/>
<path d="M2832,1086 L2848.6,1102 M2848.6,1086 L2832,1102" fill="none" stroke="#1f2157" stroke-width="4.6" stroke-linejoin="round" stroke-linecap="round"/>
<path d="M172.2,1171.1 Q181.5,1169.0 183.6,1160.0" stroke="#23265e" stroke-width="3.6" fill="none" stroke-linecap="round"/><path d="M184.5,1153.7 L178.6,1158.1 L187.4,1160.1 Z" fill="#23265e" stroke="#23265e" stroke-width="1.2" stroke-linejoin="round"/>
<path d="M1689.5,1170.6 Q1698.8,1168.5 1700.8999999999999,1159.5" stroke="#23265e" stroke-width="3.6" fill="none" stroke-linecap="round"/><path d="M1701.8,1153.2 L1695.8999999999999,1157.6 L1704.7,1159.6 Z" fill="#23265e" stroke="#23265e" stroke-width="1.2" stroke-linejoin="round"/>
<path d="M714.5,1198.1 H729.3 L721.9,1207.7 Z" fill="#b8b8b8" stroke="#b8b8b8" stroke-width="1.6" stroke-linejoin="round"/>
<path d="M2096,1197.8 H2111.5 L2103.75,1206.8 Z" fill="#b8b8b8" stroke="#b8b8b8" stroke-width="1.6" stroke-linejoin="round"/>
<circle cx="2143.8" cy="1199.8" r="5.2" fill="none" stroke="#fff" stroke-width="2.6"/>
<path d="M2147.6,1203.6 L2151.5,1207.5" fill="none" stroke="#fff" stroke-width="3" stroke-linejoin="round" stroke-linecap="round"/>
<path d="M1503.8,1351.2 L1507.6,1355 L1514.2,1347.6" fill="none" stroke="#3d4080" stroke-width="1.8" stroke-linejoin="round" stroke-linecap="round"/>
</svg>
<span class="t" style="left:358.00px;top:42.30px;font-size:28px;line-height:28px;color:#22244f;transform:scaleX(1.0745);">Application</span><span class="t" style="left:589.00px;top:39.80px;font-size:28px;line-height:28px;color:#22244f;transform:scaleX(1.1252);">Alerts (0)</span><span class="t" style="left:761.21px;top:39.80px;font-size:28px;line-height:28px;color:#22244f;transform:scaleX(1.0943);">Help</span><span class="t" style="left:909.79px;top:39.80px;font-size:28px;line-height:28px;color:#22244f;transform:scaleX(1.2078);">admin</span><span class="t" style="left:1270.87px;top:42.76px;font-size:24.5px;line-height:24.5px;color:#ffffff;transform:scaleX(1.1265);z-index:6;">Copilot</span><span class="t" style="left:2312.00px;top:23.72px;font-size:42.5px;line-height:42.5px;color:#d5492a;font-weight:700;transform:scaleX(0.8956);background:linear-gradient(180deg,#ee7a55 0%,#d84a28 45%,#c23a1c 100%);-webkit-background-clip:text;background-clip:text;color:transparent;">your</span><span class="t" style="left:2398.74px;top:29.65px;font-size:35.5px;line-height:35.5px;color:#3a3a3a;transform:scaleX(0.7649);background:linear-gradient(180deg,#8a8a8a 0%,#555 50%,#1e1e1e 100%);-webkit-background-clip:text;background-clip:text;color:transparent;">COMPANY</span><span class="t" style="left:2627.15px;top:13.95px;font-size:65.5px;line-height:65.5px;color:#222251;font-weight:700;transform:scaleX(0.9632);-webkit-text-stroke:1.6px #222251;">Etendo</span><span class="t" style="left:31.00px;top:149.37px;font-size:25.2px;line-height:25.2px;color:#333333;transform:scaleX(0.8940);-webkit-text-stroke:0.35px #333333;">WORKSPACE</span><span class="t" style="left:227.00px;top:149.88px;font-size:24.6px;line-height:24.6px;color:#ffffff;transform:scaleX(0.9104);-webkit-text-stroke:0.6px #ffffff;">WINDOWS, TABS, AND FIELDS – SA...</span><span class="t" style="left:722.71px;top:149.37px;font-size:25.2px;line-height:25.2px;color:#333333;transform:scaleX(0.8955);-webkit-text-stroke:0.35px #333333;">MODULE – CORE – 25.3.3 – ENGLI...</span><span class="t" style="left:34.50px;top:346.34px;font-size:25px;line-height:25px;color:#ffffff;transform:scaleX(0.8752);-webkit-text-stroke:0.6px #ffffff;">TAB – HEADER – SALES ORDER</span><span class="t" style="left:428.00px;top:346.00px;font-size:25.4px;line-height:25.4px;color:#333333;transform:scaleX(0.9113);-webkit-text-stroke:0.35px #333333;">WINDOW TRANSLATION</span><span class="t" style="left:755.00px;top:346.00px;font-size:25.4px;line-height:25.4px;color:#333333;transform:scaleX(0.8891);-webkit-text-stroke:0.35px #333333;">ACCESS</span><span class="t" style="left:32.77px;top:430.24px;font-size:25px;line-height:25px;color:#ffffff;transform:scaleX(0.8630);-webkit-text-stroke:0.6px #ffffff;">FIELD – CLIENT – HEADER – SALE...</span><span class="t" style="left:461.19px;top:429.90px;font-size:25.4px;line-height:25.4px;color:#333333;transform:scaleX(0.9042);-webkit-text-stroke:0.35px #333333;">MOBILE CONFIGURATION</span><span class="t" style="left:804.00px;top:429.90px;font-size:25.4px;line-height:25.4px;color:#333333;transform:scaleX(0.9210);-webkit-text-stroke:0.35px #333333;">ATTACHMENT METADATA</span><span class="t" style="left:1148.00px;top:429.90px;font-size:25.4px;line-height:25.4px;color:#333333;transform:scaleX(0.8970);-webkit-text-stroke:0.35px #333333;">TAB TRANSLATION</span><span class="t" style="left:30.20px;top:489.16px;font-size:24.5px;line-height:24.5px;color:#1a1a4a;">1</span><span class="t" style="left:96.10px;top:489.16px;font-size:24.5px;line-height:24.5px;color:#1a1a4a;transform:scaleX(0.9018);">&gt;100</span><span class="t" style="left:331.35px;top:538.63px;font-size:24.3px;line-height:24.3px;color:#222222;transform:scaleX(1.1273);">Module</span><span class="t" style="left:728.30px;top:538.63px;font-size:24.3px;line-height:24.3px;color:#222222;transform:scaleX(1.1509);">Name</span><span class="t" style="left:1025.12px;top:538.63px;font-size:24.3px;line-height:24.3px;color:#222222;transform:scaleX(1.0918);">Property</span><span class="t" style="left:1328.04px;top:538.63px;font-size:24.3px;line-height:24.3px;color:#222222;transform:scaleX(1.1624);">Column</span><span class="t" style="left:1710.69px;top:538.63px;font-size:24.3px;line-height:24.3px;color:#222222;transform:scaleX(1.1150);">Clientclass</span><span class="t" style="left:2015.62px;top:538.63px;font-size:24.3px;line-height:24.3px;color:#222222;transform:scaleX(1.1408);">Displayed</span><span class="t" style="left:2177.40px;top:538.63px;font-size:24.3px;line-height:24.3px;color:#222222;transform:scaleX(1.0992);">Sequence Number</span><span class="t" style="left:2401.27px;top:538.63px;font-size:24.3px;line-height:24.3px;color:#222222;transform:scaleX(1.1154);">Displayed Length</span><span class="t" style="left:2647.86px;top:538.63px;font-size:24.3px;line-height:24.3px;color:#222222;transform:scaleX(1.0682);">Read Only</span><span class="t" style="left:185.25px;top:592.26px;font-size:24.5px;line-height:24.5px;color:#1c1c1c;transform:scaleX(1.0545);">Core - 25.3.3 - English (USA)</span><span class="t" style="left:585.38px;top:592.26px;font-size:24.5px;line-height:24.5px;color:#1c1c1c;transform:scaleX(1.1201);">Charge Amount</span><span class="t" style="left:1185.37px;top:592.26px;font-size:24.5px;line-height:24.5px;color:#1c1c1c;transform:scaleX(1.1251);">ChargeAmt</span><span class="t" style="left:1984.38px;top:592.26px;font-size:24.5px;line-height:24.5px;color:#1c1c1c;transform:scaleX(1.0595);">No</span><span class="t" style="left:2350.80px;top:592.26px;font-size:24.5px;line-height:24.5px;color:#1c1c1c;transform:scaleX(1.0484);">380</span><span class="t" style="left:2579.14px;top:592.26px;font-size:24.5px;line-height:24.5px;color:#1c1c1c;transform:scaleX(0.8585);">10</span><span class="t" style="left:2618.38px;top:592.26px;font-size:24.5px;line-height:24.5px;color:#1c1c1c;transform:scaleX(1.0595);">No</span><span class="t" style="left:185.25px;top:648.26px;font-size:24.5px;line-height:24.5px;color:#1c1c1c;transform:scaleX(1.0545);">Core - 25.3.3 - English (USA)</span><span class="t" style="left:585.40px;top:648.26px;font-size:24.5px;line-height:24.5px;color:#1c1c1c;transform:scaleX(1.0965);">Client</span><span class="t" style="left:1186.50px;top:648.26px;font-size:24.5px;line-height:24.5px;color:#1c1c1c;transform:scaleX(1.0763);">AD_Client_ID</span><span class="t" style="left:1984.38px;top:648.26px;font-size:24.5px;line-height:24.5px;color:#1c1c1c;transform:scaleX(1.0595);">No</span><span class="t" style="left:2573.00px;top:648.26px;font-size:24.5px;line-height:24.5px;color:#1c1c1c;transform:scaleX(1.0892);">44</span><span class="t" style="left:2618.38px;top:648.26px;font-size:24.5px;line-height:24.5px;color:#1c1c1c;transform:scaleX(1.0595);">No</span><span class="t" style="left:185.25px;top:704.26px;font-size:24.5px;line-height:24.5px;color:#1c1c1c;transform:scaleX(1.0545);">Core - 25.3.3 - English (USA)</span><span class="t" style="left:585.39px;top:704.26px;font-size:24.5px;line-height:24.5px;color:#1c1c1c;transform:scaleX(1.1072);">Confirm Cancel and Replace</span><span class="t" style="left:1185.35px;top:704.26px;font-size:24.5px;line-height:24.5px;color:#1c1c1c;transform:scaleX(1.1460);">Confirmcancelandreplace</span><span class="t" style="left:1986.50px;top:704.26px;font-size:24.5px;line-height:24.5px;color:#1c1c1c;transform:scaleX(1.0197);">Yes</span><span class="t" style="left:2337.28px;top:704.26px;font-size:24.5px;line-height:24.5px;color:#1c1c1c;transform:scaleX(0.9182);">2,160</span><span class="t" style="left:2589.00px;top:704.26px;font-size:24.5px;line-height:24.5px;color:#1c1c1c;">1</span><span class="t" style="left:2618.38px;top:704.26px;font-size:24.5px;line-height:24.5px;color:#1c1c1c;transform:scaleX(1.0595);">No</span><span class="t" style="left:185.25px;top:760.26px;font-size:24.5px;line-height:24.5px;color:#1c1c1c;transform:scaleX(1.0545);">Core - 25.3.3 - English (USA)</span><span class="t" style="left:585.40px;top:760.26px;font-size:24.5px;line-height:24.5px;color:#1c1c1c;transform:scaleX(1.0960);">Copy from Orders</span><span class="t" style="left:1185.44px;top:760.26px;font-size:24.5px;line-height:24.5px;color:#1c1c1c;transform:scaleX(1.0562);">CopyFromPO</span><span class="t" style="left:1986.50px;top:760.26px;font-size:24.5px;line-height:24.5px;color:#1c1c1c;transform:scaleX(1.0197);">Yes</span><span class="t" style="left:2351.70px;top:760.26px;font-size:24.5px;line-height:24.5px;color:#1c1c1c;transform:scaleX(1.0260);">342</span><span class="t" style="left:2589.00px;top:760.26px;font-size:24.5px;line-height:24.5px;color:#1c1c1c;">1</span><span class="t" style="left:2618.38px;top:760.26px;font-size:24.5px;line-height:24.5px;color:#1c1c1c;transform:scaleX(1.0595);">No</span><span class="t" style="left:185.25px;top:816.26px;font-size:24.5px;line-height:24.5px;color:#1c1c1c;transform:scaleX(1.0545);">Core - 25.3.3 - English (USA)</span><span class="t" style="left:585.45px;top:816.26px;font-size:24.5px;line-height:24.5px;color:#1c1c1c;transform:scaleX(1.0534);">Copy Lines</span><span class="t" style="left:1185.40px;top:816.26px;font-size:24.5px;line-height:24.5px;color:#1c1c1c;transform:scaleX(1.1032);">CopyFrom</span><span class="t" style="left:1986.50px;top:816.26px;font-size:24.5px;line-height:24.5px;color:#1c1c1c;transform:scaleX(1.0197);">Yes</span><span class="t" style="left:2351.00px;top:816.26px;font-size:24.5px;line-height:24.5px;color:#1c1c1c;transform:scaleX(1.0434);">338</span><span class="t" style="left:2573.22px;top:816.26px;font-size:24.5px;line-height:24.5px;color:#1c1c1c;transform:scaleX(1.0809);">23</span><span class="t" style="left:2618.38px;top:816.26px;font-size:24.5px;line-height:24.5px;color:#1c1c1c;transform:scaleX(1.0595);">No</span><span class="t" style="left:185.25px;top:872.26px;font-size:24.5px;line-height:24.5px;color:#1c1c1c;transform:scaleX(1.0545);">Core - 25.3.3 - English (USA)</span><span class="t" style="left:585.38px;top:872.26px;font-size:24.5px;line-height:24.5px;color:#1c1c1c;transform:scaleX(1.1173);">Copy Product Template</span><span class="t" style="left:1185.36px;top:872.26px;font-size:24.5px;line-height:24.5px;color:#1c1c1c;transform:scaleX(1.1389);">Generatetemplate</span><span class="t" style="left:1984.38px;top:872.26px;font-size:24.5px;line-height:24.5px;color:#1c1c1c;transform:scaleX(1.0595);">No</span><span class="t" style="left:2589.00px;top:872.26px;font-size:24.5px;line-height:24.5px;color:#1c1c1c;">1</span><span class="t" style="left:2618.38px;top:872.26px;font-size:24.5px;line-height:24.5px;color:#1c1c1c;transform:scaleX(1.0595);">No</span><span class="t" style="left:185.25px;top:928.26px;font-size:24.5px;line-height:24.5px;color:#1c1c1c;transform:scaleX(1.0545);">Core - 25.3.3 - English (USA)</span><span class="t" style="left:585.41px;top:928.26px;font-size:24.5px;line-height:24.5px;color:#1c1c1c;transform:scaleX(1.0883);">Cost Center</span><span class="t" style="left:1185.38px;top:928.26px;font-size:24.5px;line-height:24.5px;color:#1c1c1c;transform:scaleX(1.1159);">C_Costcenter_ID</span><span class="t" style="left:1986.50px;top:928.26px;font-size:24.5px;line-height:24.5px;color:#1c1c1c;transform:scaleX(1.0197);">Yes</span><span class="t" style="left:2337.28px;top:928.26px;font-size:24.5px;line-height:24.5px;color:#1c1c1c;transform:scaleX(0.9182);">2,010</span><span class="t" style="left:2575.00px;top:928.26px;font-size:24.5px;line-height:24.5px;color:#1c1c1c;transform:scaleX(1.0141);">32</span><span class="t" style="left:2618.38px;top:928.26px;font-size:24.5px;line-height:24.5px;color:#1c1c1c;transform:scaleX(1.0595);">No</span><span class="t" style="left:2818.80px;top:928.26px;font-size:24.5px;line-height:24.5px;color:#1c1c1c;transform:scaleX(1.1000);">Dim</span><span class="t" style="left:33.05px;top:1019.97px;font-size:25.2px;line-height:25.2px;color:#333333;transform:scaleX(0.8752);-webkit-text-stroke:0.35px #333333;">FIELD TRANSLATION</span><span class="t" style="left:312.50px;top:1016.48px;font-size:24.6px;line-height:24.6px;color:#ffffff;transform:scaleX(0.9293);-webkit-text-stroke:0.6px #ffffff;">* NAVIGATION RULES</span><span class="t" style="left:60.04px;top:1082.52px;font-size:23.6px;line-height:23.6px;color:#333333;transform:scaleX(0.9648);">New</span><span class="t" style="left:63.25px;top:1149.51px;font-size:23.5px;line-height:23.5px;color:#333333;transform:scaleX(1.0534);">Module *</span><span class="t" style="left:775.65px;top:1148.81px;font-size:23.5px;line-height:23.5px;color:#333333;transform:scaleX(1.0467);">Sequence Number *</span><span class="t" style="left:1487.53px;top:1149.61px;font-size:23.5px;line-height:23.5px;color:#333333;transform:scaleX(1.0696);">Navigate to Tab *</span><span class="t" style="left:73.39px;top:1190.81px;font-size:23.5px;line-height:23.5px;color:#333333;transform:scaleX(1.0079);">Core - 25.3.3 - English (USA)</span><span class="t" style="left:787.70px;top:1190.81px;font-size:23.5px;line-height:23.5px;color:#333333;">10</span><span class="t" style="left:2239.54px;top:1191.51px;font-size:23.5px;line-height:23.5px;color:#333333;transform:scaleX(1.0647);">Direct Navigation</span><span class="t" style="left:63.76px;top:1251.81px;font-size:23.5px;line-height:23.5px;color:#333333;transform:scaleX(0.9413);">HQL Logic</span><span class="t" style="left:1528.70px;top:1341.81px;font-size:23.5px;line-height:23.5px;color:#333333;transform:scaleX(1.0372);">Active</span>
<svg class="ic" style="z-index:12" width="2908" height="1460" viewBox="0 0 2908 1460">
<g fill="#6a6a6a"><path d="M2880,600.5 L2885,595.5 L2890,600.5 Z"/><path d="M2880,925.5 L2885,930.5 L2890,925.5 Z"/><path d="M198.5,957 L193,962 L198.5,967 Z"/><path d="M2849,957.5 L2854.5,962 L2849,966.5 Z"/></g><g stroke="#8a8a8a" stroke-width="1.4"><path d="M2878,671.5 H2892 M2878,675.5 H2892 M2878,679.5 H2892"/><path d="M624,955 V969 M628,955 V969 M632,955 V969"/></g>
</svg>
</body></html>
